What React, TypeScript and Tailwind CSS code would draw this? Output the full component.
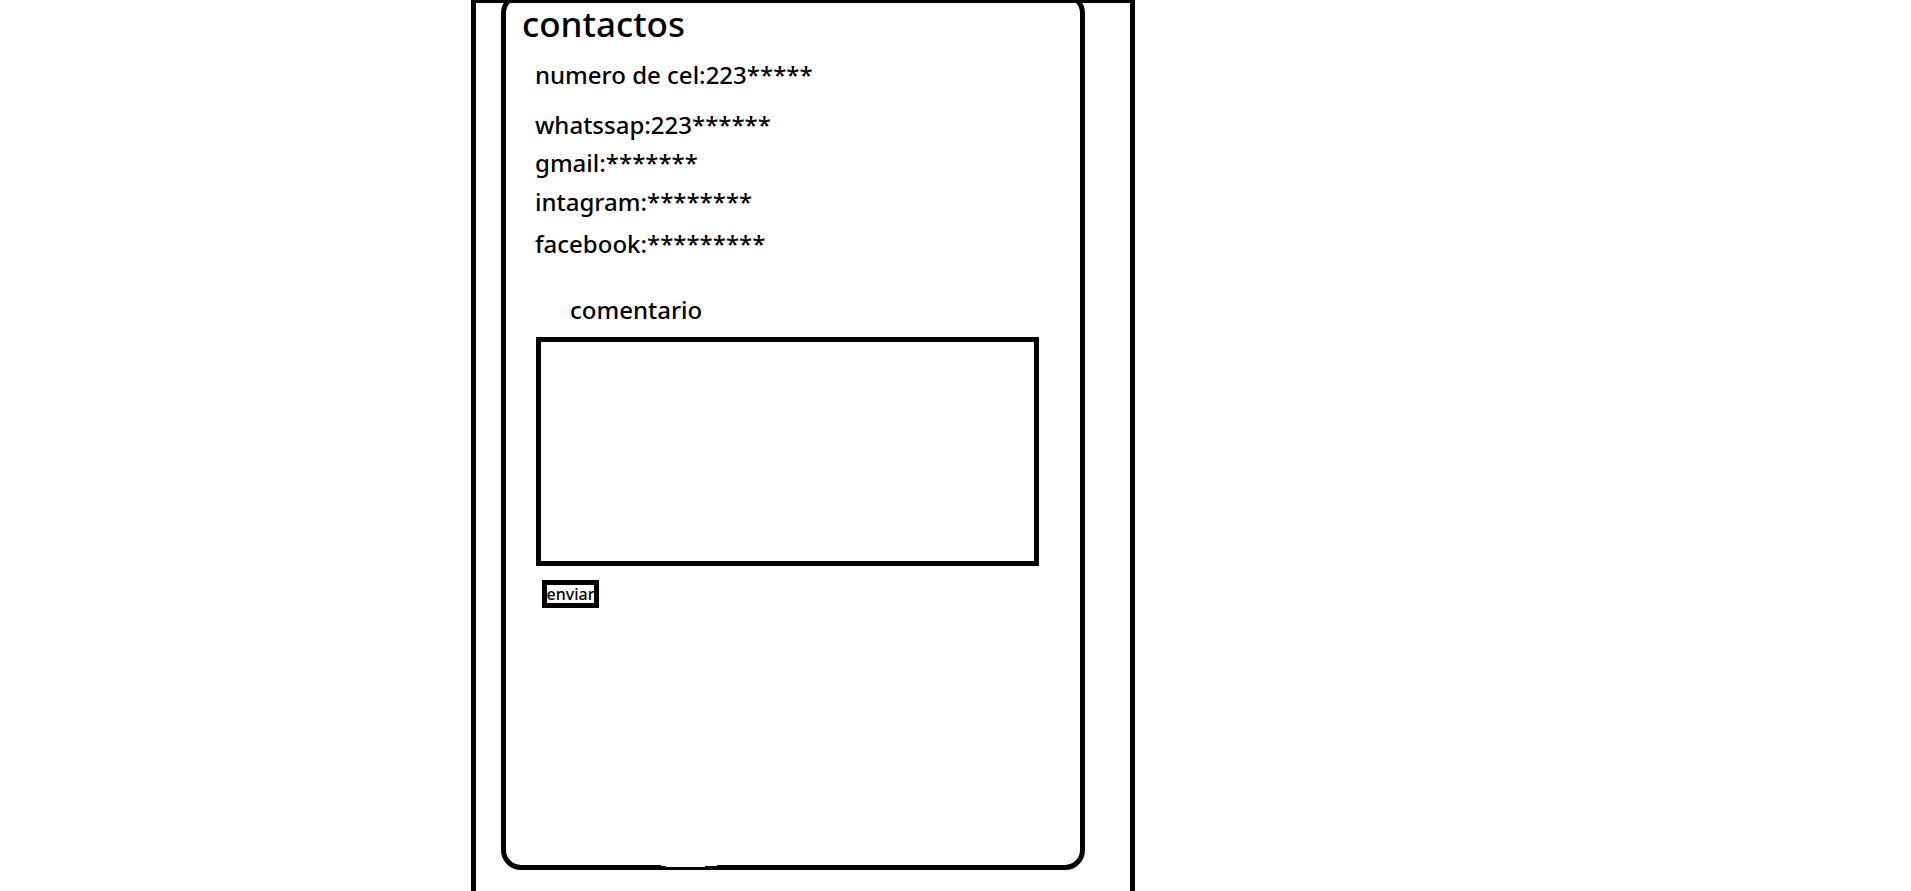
const contacts = [
  { text: 'numero de cel:223*****', gap: 'mt-[15px]' },
  { text: 'whatssap:223******', gap: 'mt-[18px]' },
  { text: 'gmail:*******', gap: 'mt-1.5' },
  { text: 'intagram:********', gap: 'mt-[7px]' },
  { text: 'facebook:*********', gap: 'mt-2.5' },
];

export default function App() {
  return (
    <div className="grid min-h-screen grid-cols-[471fr_664fr_776fr] overflow-hidden bg-white font-['Noto_Sans',sans-serif] font-medium text-black">
      <main className="col-start-2 flex flex-col border-x-5 border-t-3 border-black pr-[45px] pb-[21px] pl-[25px]">
        <section className="relative -mt-2.5 flex grow flex-col rounded-[20px] border-5 border-black pt-1.5">
          <h1 className="pl-4 text-[35px] leading-10">contactos</h1>

          <ul className="pl-[29px] text-2xl leading-8">
            {contacts.map(({ text, gap }) => (
              <li key={text} className={gap}>
                {text}
              </li>
            ))}
          </ul>

          <form className="flex flex-col items-start pr-[41px] pl-[30px]" onSubmit={(e) => e.preventDefault()}>
            <label htmlFor="comentario" className="mt-[34px] pl-[34px] text-2xl leading-8">
              comentario
            </label>
            <textarea
              id="comentario"
              className="mt-[11px] block h-[229px] w-full resize-none border-5 border-black bg-white p-2 text-2xl outline-none"
            />
            <button
              type="submit"
              className="mt-3.5 ml-1.5 flex h-7 w-[57px] items-center justify-center overflow-hidden border-5 border-black bg-white text-base leading-5"
            >
              enviar
            </button>
          </form>

          {/* Worn spot on the card's bottom edge */}
          <svg
            aria-hidden="true"
            className="absolute -bottom-0.5 left-[27%] h-0.5 w-14"
            viewBox="0 0 56 2"
            shapeRendering="crispEdges"
          >
            <path d="M0 0H56V1H44V2H5V1H0Z" fill="#fff" />
          </svg>
        </section>
      </main>
    </div>
  );
}
